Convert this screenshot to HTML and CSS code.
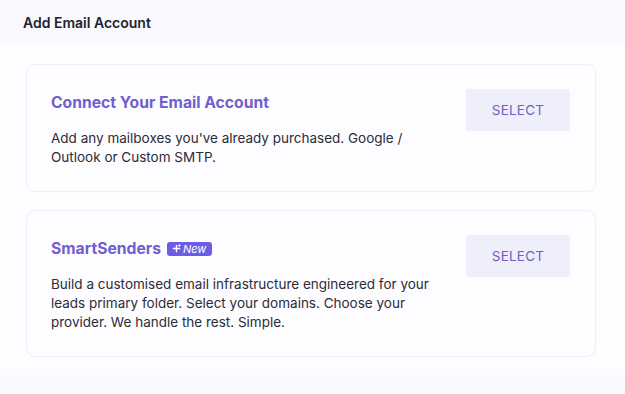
FILE: index.html
```html
<!DOCTYPE html>
<html lang="en">
<head>
    <meta charset="UTF-8"/>
    <title>Add Email Account</title>
    <link rel="stylesheet" href="styles.css">
</head>
<body>
<div class="modal">
    <header class="modal-head">
        <h1>Add Email Account</h1>
    </header>

    <div class="modal-body">
        <section class="option">
            <div class="option-text">
                <h2>Connect Your Email Account</h2>
                <p>Add any mailboxes you've already purchased. Google / Outlook or Custom SMTP.</p>
            </div>
            <button class="select-btn">SELECT</button>
        </section>

        <section class="option">
            <div class="option-text">
                <h2>SmartSenders <span class="badge">
                    <svg width="9" height="9" viewBox="0 0 10 10"><path d="M5 1.5v7M1.5 5h7" stroke="#fff" stroke-width="1.6" stroke-linecap="round"/><path d="M8.2 0.6v2.2M7.1 1.7h2.2" stroke="#fff" stroke-width="0.9" stroke-linecap="round"/></svg>
                    <i>New</i></span></h2>
                <p>Build a customised email infrastructure engineered for your leads primary folder. Select your domains. Choose your provider. We handle the rest. Simple.</p>
            </div>
            <button class="select-btn">SELECT</button>
        </section>
    </div>

    <div class="modal-foot"></div>
</div>
</body>
</html>
```

FILE: styles.css
```css
body {
    margin: 0;
    font-family: "Inter", "Liberation Sans", sans-serif;
    background: #fdfdff;
    color: #2a2a36;
}

.modal {
    width: 625px;
    height: 394px;
    display: flex;
    flex-direction: column;
}

.modal-head {
    height: 44px;
    background: #f8f8fd;
    padding: 0 23px;
    display: flex;
    align-items: center;
}

.modal-head h1 {
    margin: 0;
    font-size: 14px;
    font-weight: 600;
    color: #1e2130;
}

.modal-body {
    flex: 1;
    padding: 20px 29px 0 26px;
    display: flex;
    flex-direction: column;
    gap: 18px;
}

.option {
    display: flex;
    justify-content: space-between;
    align-items: flex-start;
    border: 1px solid #eeeef4;
    border-radius: 9px;
    background: #fdfdff;
    padding: 24px 25px 24px 24px;
}

.option-text {
    width: 390px;
}

.option h2 {
    margin: 4px 0 17px;
    font-size: 15.7px;
    font-weight: 700;
    color: #6f5fd0;
    display: flex;
    align-items: center;
    gap: 6px;
}

.option p {
    margin: 0;
    font-size: 13.5px;
    line-height: 19px;
    color: #2c2c38;
}

.badge {
    display: inline-flex;
    align-items: center;
    gap: 2px;
    background: #6c5de6;
    color: #fff;
    border-radius: 3px;
    padding: 1px 6px 1px 5px;
    font-size: 11px;
    font-weight: 400;
    line-height: 12px;
}

.select-btn {
    width: 104px;
    height: 42px;
    border: none;
    border-radius: 2px;
    background: #efeefb;
    color: #6e62c8;
    font-family: inherit;
    font-size: 13.5px;
    letter-spacing: 0.2px;
}

.modal-foot {
    height: 19px;
    background: #f8f8fd;
}
```
